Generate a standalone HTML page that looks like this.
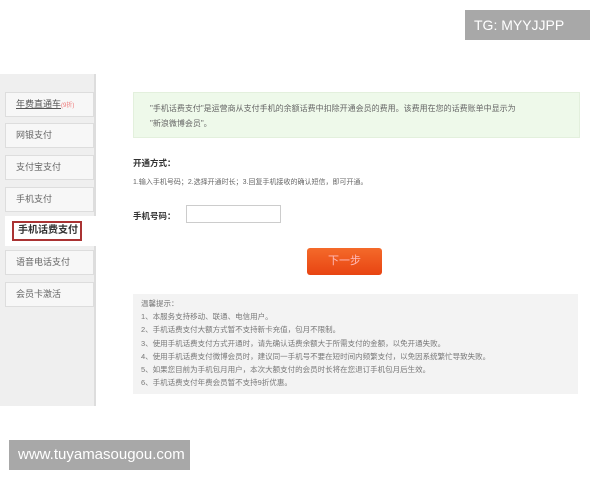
<!DOCTYPE html>
<html><head><meta charset="utf-8"><style>
*{margin:0;padding:0;box-sizing:border-box}
body{width:600px;height:480px;background:#fff;position:relative;overflow:hidden;font-family:"Liberation Sans","Noto Sans CJK SC",sans-serif;color:#555}
.abs{position:absolute}
.side{left:0;top:74px;width:96px;height:332px;background:#efefef;border-right:2px solid #ddd}
.item{position:absolute;left:5px;width:89px;height:25px;background:#f7f7f7;border:1px solid #ddd;font-size:9px;line-height:23px;padding-left:10px;color:#666}
.sel{position:absolute;left:12px;top:221px;width:70px;height:20px;border:2px solid #a33;background:#fff;font-size:10px;font-weight:bold;line-height:16px;padding-left:4px;color:#333}
.green{left:133px;top:92px;width:447px;height:46px;background:#eef9ea;border:1px solid #e3f0dd;font-size:8px;line-height:15px;padding:8px 10px 8px 16px;color:#666;white-space:nowrap}
.tips{left:133px;top:294px;width:445px;height:100px;background:#f3f3f3;font-size:7.5px;line-height:13.2px;padding:3px 8px;color:#777}
.wm{background:#a8a8a8;color:#fff;font-size:15px;line-height:30px;padding:0 9px}
</style></head><body>
<div class="abs side"></div>
<div class="item" style="top:92px"><span style="text-decoration:underline;color:#555">年费直通车</span><span style="color:#e77;font-size:6px">(9折)</span></div>
<div class="item" style="top:123px">网银支付</div>
<div class="item" style="top:155px">支付宝支付</div>
<div class="item" style="top:187px">手机支付</div>
<div class="abs" style="left:5px;top:216px;width:93px;height:30px;background:#fff"></div>
<div class="sel">手机话费支付</div>
<div class="item" style="top:250px">语音电话支付</div>
<div class="item" style="top:282px">会员卡激活</div>

<div class="abs green">"手机话费支付"是运营商从支付手机的余额话费中扣除开通会员的费用。该费用在您的话费账单中显示为<br>"新浪微博会员"。</div>
<div class="abs" style="left:133px;top:157px;font-size:8.5px;font-weight:bold;color:#333">开通方式：</div>
<div class="abs" style="left:133px;top:177px;font-size:7px;color:#666">1.输入手机号码；2.选择开通时长；3.回复手机接收的确认短信，即可开通。</div>
<div class="abs" style="left:133px;top:210px;font-size:8.5px;font-weight:bold;color:#333">手机号码：</div>
<div class="abs" style="left:186px;top:205px;width:95px;height:18px;border:1px solid #ccc;background:#fff"></div>
<div class="abs" style="left:307px;top:248px;width:75px;height:27px;background:linear-gradient(#f46a2a,#e84412);border-radius:3px;color:#fbb;font-size:11px;line-height:27px;text-align:center">下一步</div>
<div class="abs tips">温馨提示：<br>1、本服务支持移动、联通、电信用户。<br>2、手机话费支付大额方式暂不支持新卡充值，包月不限制。<br>3、使用手机话费支付方式开通时，请先确认话费余额大于所需支付的金额，以免开通失败。<br>4、使用手机话费支付微博会员时，建议同一手机号不要在短时间内频繁支付，以免因系统繁忙导致失败。<br>5、如果您目前为手机包月用户，本次大额支付的会员时长将在您退订手机包月后生效。<br>6、手机话费支付年费会员暂不支持9折优惠。</div>

<div class="abs wm" style="left:465px;top:10px;width:125px;height:30px;font-size:14px">TG: MYYJJPP</div>
<div class="abs wm" style="left:9px;top:440px;width:181px;height:30px">www.tuyamasougou.com</div>
</body></html>
